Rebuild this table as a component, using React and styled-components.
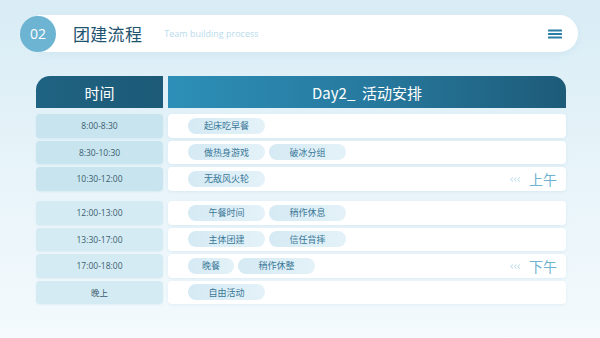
import React from "react";
import styled, { createGlobalStyle } from "styled-components";

const Global = createGlobalStyle`
  html, body { margin: 0; padding: 0; }
  body {
    width: 600px;
    height: 338px;
    overflow: hidden;
    font-family: "Open Sans", "Noto Sans CJK SC", sans-serif;
  }
`;

const Page = styled.div`
  width: 600px;
  height: 338px;
  box-sizing: border-box;
  padding-top: 15px;
  background: linear-gradient(180deg, #d8ecf5 0%, #e6f3f9 45%, #f4fafd 100%);
`;

const Header = styled.div`
  display: flex;
  align-items: center;
  margin: 0 22px 0 20px;
  height: 37px;
`;

const Circle = styled.div`
  position: relative;
  z-index: 1;
  flex-shrink: 0;
  width: 36px;
  height: 36px;
  border-radius: 50%;
  background: #6cb4d2;
  color: #fff;
  font-size: 14px;
  display: flex;
  align-items: center;
  justify-content: center;
`;

const Bar = styled.div`
  flex: 1;
  height: 37px;
  margin-left: -18px;
  padding: 0 16px 0 35px;
  background: #fff;
  border-radius: 0 19px 19px 0;
  display: flex;
  align-items: center;
  box-shadow: 0 2px 6px rgba(120, 180, 210, 0.12);
`;

const Title = styled.div`
  font-family: "Noto Sans CJK SC", sans-serif;
  font-size: 17px;
  font-weight: 400;
  color: #1f5470;
  letter-spacing: 0.3px;
`;

const Subtitle = styled.div`
  margin-left: 22px;
  font-size: 9px;
  color: #b9dbeb;
`;

const Menu = styled.svg`
  margin-left: auto;
`;

const Table = styled.div`
  margin: 24px 34px 0 36px;
  display: grid;
  grid-template-columns: 127px 398px;
  column-gap: 5px;
`;

const HeadCell = styled.div`
  height: 32px;
  display: flex;
  align-items: center;
  justify-content: center;
  color: #fff;
  font-family: "Noto Sans CJK SC", sans-serif;
  font-size: 15px;
  border-radius: ${(p) => (p.$side === "left" ? "14px 0 0 0" : "0 14px 0 0")};
  background: ${(p) =>
    p.$side === "left"
      ? "linear-gradient(90deg, #1f6382, #1c5a77)"
      : "linear-gradient(90deg, #2d8fb7 0%, #26779c 55%, #1d5b78 100%)"};
  margin-bottom: 6px;
`;

const Group = styled.div`
  grid-column: 1 / span 2;
  display: grid;
  grid-template-columns: 127px 398px;
  column-gap: 5px;
  row-gap: 3px;
  margin-bottom: 10.5px;
`;

const TimeCell = styled.div`
  height: 23.5px;
  border-radius: 4px;
  background: ${(p) => (p.$light ? "#d4ebf4" : "#c7e4ef")};
  display: flex;
  align-items: center;
  justify-content: center;
  font-size: 8.5px;
  color: #3d5d6e;
  box-shadow: 0 1px 2px rgba(110, 170, 200, 0.12);
`;

const ActCell = styled.div`
  height: 23.5px;
  border-radius: 4px;
  background: #fff;
  display: flex;
  align-items: center;
  gap: 4px;
  padding: 0 9px 0 20px;
  box-sizing: border-box;
  box-shadow: 0 1px 3px rgba(110, 170, 200, 0.14);
`;

const Pill = styled.div`
  width: ${(p) => (p.$narrow ? "46px" : "77px")};
  height: 16px;
  border-radius: 8px;
  background: linear-gradient(90deg, #d5eaf4 0%, #e4f2f8 100%);
  color: #3a7898;
  font-family: "Noto Sans CJK SC", sans-serif;
  font-size: 9px;
  display: flex;
  align-items: center;
  justify-content: center;
`;

const Period = styled.div`
  margin-left: auto;
  display: flex;
  align-items: center;
  gap: 8px;
`;

const Arrows = styled.svg`
  margin-top: 2px;
`;

const PeriodText = styled.span`
  font-family: "Noto Sans CJK SC", sans-serif;
  font-size: 14px;
  color: #6fb3d1;
`;

const morning = [
  { time: "8:00-8:30", acts: [["起床吃早餐"]] },
  { time: "8:30-10:30", acts: [["做热身游戏"], ["破冰分组"]] },
  { time: "10:30-12:00", acts: [["无敌风火轮"]], period: "上午" },
];

const afternoon = [
  { time: "12:00-13:00", acts: [["午餐时间"], ["稍作休息"]], light: true },
  { time: "13:30-17:00", acts: [["主体团建"], ["信任背摔"]], light: true },
  { time: "17:00-18:00", acts: [["晚餐", true], ["稍作休整"]], period: "下午", light: true },
  { time: "晚上", acts: [["自由活动"]], light: true },
];

function Chevrons() {
  return (
    <Arrows width="11" height="5" viewBox="0 0 11 5">
      {[0, 3.5, 7].map((x) => (
        <polyline
          key={x}
          points={`${x + 3},0.5 ${x + 0.5},2.5 ${x + 3},4.5`}
          fill="none"
          stroke="#b8d9e9"
          strokeWidth="1"
        />
      ))}
    </Arrows>
  );
}

function Rows({ rows }) {
  return (
    <Group>
      {rows.map((r) => (
        <React.Fragment key={r.time}>
          <TimeCell $light={r.light}>{r.time}</TimeCell>
          <ActCell>
            {r.acts.map(([a, narrow]) => (
              <Pill key={a} $narrow={narrow}>
                {a}
              </Pill>
            ))}
            {r.period && (
              <Period>
                <Chevrons />
                <PeriodText>{r.period}</PeriodText>
              </Period>
            )}
          </ActCell>
        </React.Fragment>
      ))}
    </Group>
  );
}

export default function App() {
  return (
    <>
      <Global />
      <Page>
        <Header>
          <Circle>02</Circle>
          <Bar>
            <Title>团建流程</Title>
            <Subtitle>Team building process</Subtitle>
            <Menu width="14" height="10" viewBox="0 0 14 10">
              <rect x="0" y="0.5" width="14" height="2" rx="0.5" fill="#2b7ea5" />
              <rect x="0" y="4" width="14" height="2" rx="0.5" fill="#2b7ea5" />
              <rect x="0" y="7.5" width="14" height="2" rx="0.5" fill="#2b7ea5" />
            </Menu>
          </Bar>
        </Header>
        <Table>
          <HeadCell $side="left">时间</HeadCell>
          <HeadCell $side="right">Day2_&nbsp; 活动安排</HeadCell>
          <Rows rows={morning} />
          <Rows rows={afternoon} />
        </Table>
      </Page>
    </>
  );
}
